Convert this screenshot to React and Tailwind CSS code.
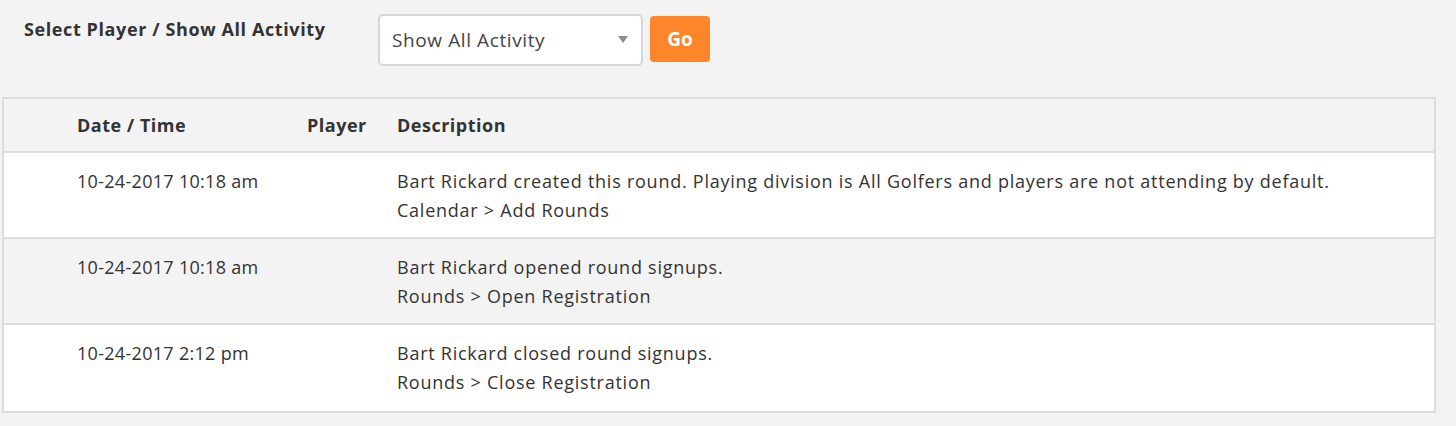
import { useState } from 'react';

const rows = [
  {
    time: '10-24-2017 10:18 am',
    player: '',
    desc: 'Bart Rickard created this round. Playing division is All Golfers and players are not attending by default.',
    path: 'Calendar > Add Rounds'
  },
  {
    time: '10-24-2017 10:18 am',
    player: '',
    desc: 'Bart Rickard opened round signups.',
    path: 'Rounds > Open Registration'
  },
  {
    time: '10-24-2017 2:12 pm',
    player: '',
    desc: 'Bart Rickard closed round signups.',
    path: 'Rounds > Close Registration'
  }
];

export default function App() {
  const [player, setPlayer] = useState('all');

  return (
    <main className="min-h-screen bg-[#f3f3f3] text-[#333] font-['Open_Sans',sans-serif] pt-[14px] pl-[2px] pr-[20px]">
      <div className="flex items-start">
        <div className="w-[376px] pl-[22px] pt-[1px] text-[18px] font-bold tracking-[0.6px] leading-[28px] text-[#333]">
          Select Player / Show All Activity
        </div>
        <div className="relative w-[265px] h-[52px]">
          <select
            value={player}
            onChange={e => setPlayer(e.target.value)}
            className="appearance-none w-full h-full bg-white border-2 border-[#d6d6d6] rounded-[5px] pl-[12px] text-[19px] tracking-[0.6px] text-[#444] outline-none"
          >
            <option value="all">Show All Activity</option>
          </select>
          <div className="absolute right-[15px] top-[22px] w-0 h-0 border-l-[5px] border-r-[5px] border-t-[7px] border-l-transparent border-r-transparent border-t-[#8a8a8a] pointer-events-none" />
        </div>
        <button className="ml-[7px] mt-[2px] w-[60px] h-[46px] bg-[#fd862a] text-white rounded-[4px] text-[19px] font-bold">
          Go
        </button>
      </div>

      <div className="mt-[31px] border-2 border-[#dddddd] w-[1434px]">
        <div className="flex h-[54px] items-center bg-[#f3f3f3] border-b-2 border-[#dddddd] text-[18px] font-bold tracking-[0.5px]">
          <div className="w-[303px] pl-[73px]">Date / Time</div>
          <div className="w-[90px]">Player</div>
          <div className="flex-1">Description</div>
        </div>
        {rows.map((r, i) => (
          <div
            key={i}
            className={`flex h-[86px] pt-[14px] text-[18px] leading-[29px] ${i % 2 === 1 ? 'bg-[#f3f3f3]' : 'bg-white'} ${i < rows.length - 1 ? 'border-b-2 border-[#dddddd]' : ''}`}
          >
            <div className="w-[303px] pl-[73px] tracking-[0.3px]">{r.time}</div>
            <div className="w-[90px]">{r.player}</div>
            <div className="flex-1 tracking-[0.75px]">
              <div>{r.desc}</div>
              <div>{r.path}</div>
            </div>
          </div>
        ))}
      </div>
    </main>
  );
}
